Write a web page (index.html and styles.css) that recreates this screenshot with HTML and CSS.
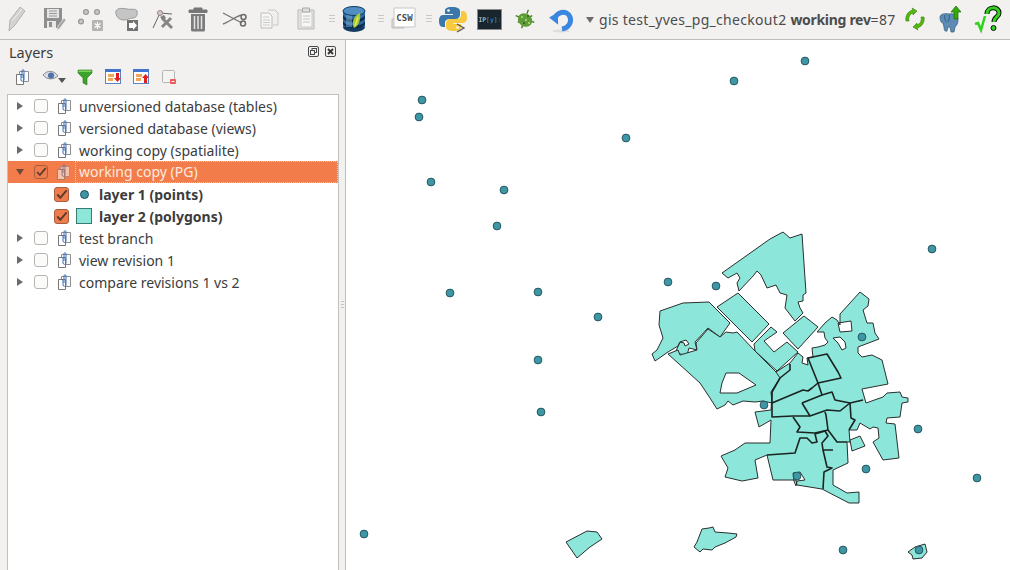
FILE: index.html
```html
<!DOCTYPE html>
<html lang="en">
<head>
<meta charset="UTF-8">
<title>QGIS - Layers</title>
<link rel="stylesheet" href="styles.css">
</head>
<body>
<svg class="defs" width="0" height="0">
    <symbol id="group" viewBox="0 0 16 18">
        <path d="M5.500 3.500h9v10h-9z" fill="#fafafa" stroke="#8e8e8e"/>
        <path d="M2.500 6.500h7v10h-7z" fill="#fff" stroke="#777"/>
        <path d="M7 6v6c0 1.800 3 1.800 3 0V2.800c0-1.500-2-1.500-2 0V10" fill="none" stroke="#3f70b8"/>
    </symbol>
    <symbol id="check" viewBox="0 0 14 14">
        <path d="M2.500 7l3.200 3.500L12.500 2.500" fill="none" stroke="#5a3a2c" stroke-width="2"/>
    </symbol>
</svg>

<header class="toolbar">
    <svg class="slot wide" viewBox="0 0 36 39"><path d="M10 31l1-11L21 7l5 4-10 14z" fill="#d2d2d0" stroke="#b3b3b1"/><path d="M13 21l10-12" stroke="#eee"/></svg>
    <svg class="slot" viewBox="0 0 36 39"><path d="M8 8h18v17l-3 3H8z" fill="#8f8f8f"/><path d="M11 9h12v9H11z" fill="#e5e5e5"/><path d="M13 11h8M13 13.500h8M13 16h8" stroke="#999"/><path d="M11 21h9v7h-9z" fill="#e8e8e8"/><path d="M13 22h3v5h-3z" fill="#8f8f8f"/><path d="M21 31l1-5 6-8 2 2-6 8z" fill="#a4a4a4" stroke="#eee" stroke-width=".6"/></svg>
    <svg class="slot" viewBox="0 0 36 39"><g fill="#c9c9c9" stroke="#9a9a9a" stroke-width="1.300"><circle cx="14" cy="12" r="2.400"/><circle cx="25" cy="12" r="2.400"/><circle cx="9" cy="21.500" r="2.400"/></g><rect x="20" y="20" width="11" height="11" rx="1" fill="#b4b4b4"/><path d="M25.500 22v7M22.500 23.500l6 4M28.500 23.500l-6 4" stroke="#fff" stroke-width="1.200"/></svg>
    <svg class="slot" viewBox="0 0 36 39"><path d="M8 11c1-3 7-3 11-2 4 1 9-1 10 2 1 4-1 7-4 7-4 0-5 2-9 2-5 0-9-4-8-9z" fill="#c5c5c5" stroke="#9a9a9a"/><path d="M19 20h11v11H19z" fill="#727272"/><path d="M21 23h4v-2l4 4.500-4 4.500v-2h-4z" fill="#fff"/></svg>
    <svg class="slot" viewBox="0 0 36 39"><path d="M9 28l7-15 12 1" fill="none" stroke="#666"/><circle cx="16" cy="13" r="2.500" fill="#ccc" stroke="#a08080"/><path d="M18 27l9-9M18 18l10 10" stroke="#868686" stroke-width="3"/><path d="M16 17l4-2 2 3-3 2z" fill="#808080"/></svg>
    <svg class="slot" viewBox="0 0 36 39"><path d="M9 10h18v2.500H9zM14 10V8h8v2" fill="#777" stroke="#777"/><path d="M11 14h14v16a1.500 1.500 0 0 1-1.500 1.500h-11A1.500 1.500 0 0 1 11 30z" fill="#7b7b7b"/><path d="M14.500 16v13M18 16v13M21.500 16v13" stroke="#e4e4e4" stroke-width="1.500"/></svg>
    <svg class="slot" viewBox="0 0 36 39"><path d="M7 13l19 10M7 24c6-2 12-7 18-9" fill="none" stroke="#777" stroke-width="1.400"/><circle cx="27.500" cy="17" r="2.500" fill="none" stroke="#6a6a6a" stroke-width="1.500"/><circle cx="27" cy="23.500" r="2.500" fill="none" stroke="#6a6a6a" stroke-width="1.500"/></svg>
    <svg class="slot" viewBox="0 0 36 39"><path d="M16 10h7l3 3v12h-5" fill="#efefee" stroke="#c8c8c6"/><path d="M9 13h8l3 3v12H9z" fill="#f6f6f5" stroke="#bcbcba"/><path d="M11 17h6M11 20h7M11 22.500h7M11 25h7" stroke="#ccc"/></svg>
    <svg class="slot" viewBox="0 0 36 39"><path d="M10 10h16v19H10z" fill="#e3e3e1" stroke="#b9b9b7"/><path d="M13 12h11v15H13z" fill="#f7f7f6" stroke="#c8c8c6"/><path d="M14.500 8h7v4h-7z" fill="#ddd" stroke="#aaa"/><path d="M15 16h7M15 19h7M15 22h7" stroke="#c4c4c2"/></svg>
    <span class="grip"></span>
    <svg class="slot db" viewBox="0 0 28 39">
        <ellipse cx="14" cy="27" rx="11" ry="5" fill="#123b63"/><path d="M3 11h22v16H3z" fill="#2d6a9f"/><path d="M3 15c2 6 20 6 22 0v3c-2 6-20 6-22 0zM3 21c2 6 20 6 22 0v3c-2 6-20 6-22 0z" fill="#0f2d4f"/><path d="M6 12h6v15H6z" fill="#7fb0d8" opacity=".5"/><ellipse cx="14" cy="11" rx="11" ry="4.500" fill="#4f8dc2" stroke="#123b63"/>
        <path d="M14 28c-3-5 0-13 6-15 1 6-1 13-6 15z" fill="#a3c93a"/><path d="M15 26l3-9" stroke="#f0e64a" stroke-width="1.500"/>
    </svg>
    <span class="grip gap-l"></span>
    <svg class="slot csw" viewBox="0 0 30 39">
        <path d="M3 19h12v9H3z" fill="#dcdcdc" stroke="#bbb"/><path d="M5 8h21v19H5z" fill="#fff" stroke="#c6c6c6"/>
        <text x="15.500" y="21" class="csw-text">CSW</text>
    </svg>
    <span class="grip gap-r"></span>
    <svg class="slot py" viewBox="0 0 32 39">
        <path d="M15 7c-6 0-7 2-7 4v3h8v1H6c-3 0-4 3-4 6s1 6 4 6h2v-4c0-3 2-4 5-4h6c2 0 4-2 4-4v-4c0-2-2-4-8-4z" fill="#3a78ab"/><circle cx="11.500" cy="10.500" r="1.300" fill="#fff"/>
        <path d="M17 31c6 0 7-2 7-4v-3h-8v-1h10c3 0 4-3 4-6s-1-6-4-6h-2v4c0 3-2 4-5 4h-6c-2 0-4 2-4 4v4c0 2 2 4 8 4z" fill="#f7c93e"/><circle cx="20.500" cy="27.500" r="1.300" fill="#fff"/>
        <path d="M20 24l7 4-7 4" fill="none" stroke="#555" stroke-width="1.300"/>
    </svg>
    <svg class="slot ipy" viewBox="0 0 40 39">
        <rect x="8.500" y="9.500" width="24" height="20" fill="#18252d" stroke="#8b8b8b"/>
        <text x="9.500" y="22" class="ipy-text">IP<tspan fill="#4c9ed9">[y]</tspan><tspan fill="#2e6f9c">:</tspan></text>
    </svg>
    <svg class="slot bug" viewBox="0 0 32 39">
        <path d="M9 12l3 3M8 19h4M9 26l3-3M23 12l-3 3M24 19h-4M23 26l-3-3" stroke="#3d7a22" stroke-width="1.300" transform="rotate(-25 16 19)"/>
        <ellipse cx="16" cy="20" rx="7.500" ry="6.500" fill="#5d9c36" transform="rotate(35 16 20)"/>
        <circle cx="13" cy="17" r="1" fill="#b6dc83"/><circle cx="17" cy="20" r="1" fill="#b6dc83"/><circle cx="20" cy="23" r="1" fill="#b6dc83"/><circle cx="15" cy="23" r="1" fill="#2f6317"/><circle cx="19" cy="16" r="1" fill="#2f6317"/>
    </svg>
    <svg class="slot undo" viewBox="0 0 32 39">
        <ellipse cx="20" cy="31" rx="9" ry="1.500" fill="#ddd"/>
        <path d="M14 20c0-8 12-11 15-3 2 6-2 11-8 12" fill="none" stroke="#3a86e0" stroke-width="5"/>
        <path d="M8 18l8-6 2 12z" fill="#3a86e0" transform="rotate(8 12 18)"/>
    </svg>
    <svg class="caret" viewBox="0 0 10 39"><path d="M1 17h8l-4 6z" fill="#6c6c6c"/></svg>
    <span class="status">gis test_yves_pg_checkout2 <b>working rev</b>=87</span>
    <svg class="slot" viewBox="0 0 36 39">
        <path d="M9 21c-1-5 2-10 7-11l-1-2 5 3-4 4v-2c-3 1-5 4-4 8z" fill="#55b80f" stroke="#2f7a05" stroke-width=".6"/>
        <path d="M27 17c1 5-2 10-7 11l1 2-5-3 4-4v2c3-1 5-4 4-8z" fill="#55b80f" stroke="#2f7a05" stroke-width=".6"/>
    </svg>
    <svg class="slot" viewBox="0 0 36 39">
        <path d="M7 17c0-3 5-4 9-3 5-1 9 1 9 6 0 4-2 6-3 7l-1 5h-3l-1-5h-2l-1 4c-2 1-3-1-3-4l-1-4c-2 0-3-3-3-6z" fill="#5d8bb4" stroke="#32597d" stroke-width=".7"/>
        <path d="M12 15c-1 3 0 6 2 7M16 15c1 2 0 5-1 7" fill="none" stroke="#2f5578" stroke-width=".8"/>
        <path d="M21 19V12h-3l5-6 5 6h-3v7z" fill="#35a80c" stroke="#1f6b05" stroke-width=".7"/>
    </svg>
    <svg class="slot last" viewBox="0 0 36 39">
        <path d="M6 24l3-1 3 7 4-14" fill="none" stroke="#2fd41a" stroke-width="2.500"/>
        <path d="M18 14c0-8 12-8 12-1 0 4-5 4-5 9" fill="none" stroke="#111" stroke-width="5"/><path d="M18 14c0-8 12-8 12-1 0 4-5 4-5 9" fill="none" stroke="#2fd41a" stroke-width="3"/>
        <circle cx="24.500" cy="28" r="2.500" fill="#2fd41a" stroke="#111"/>
    </svg>
</header>

<main class="workspace">
    <aside class="layers">
        <div class="panel-title">
            <span>Layers</span>
            <span class="panel-btns">
                <svg viewBox="0 0 11 11"><rect x=".5" y=".5" width="10" height="10" rx="1.500" fill="none" stroke="#4a4a4a"/><rect x="4" y="2.500" width="4.500" height="4" fill="none" stroke="#4a4a4a"/><rect x="2.500" y="4.500" width="4" height="4" fill="#f2f1f0" stroke="#4a4a4a"/></svg>
                <svg viewBox="0 0 11 11"><rect x=".5" y=".5" width="10" height="10" rx="1.500" fill="none" stroke="#4a4a4a"/><path d="M3 3l5 5M8 3l-5 5" stroke="#333" stroke-width="1.800"/></svg>
            </span>
        </div>
        <div class="panel-tools">
            <svg class="tool" viewBox="0 0 28 18"><use href="#group" x="6" y="0" width="16" height="18"/></svg>
            <svg class="tool eye" viewBox="0 0 35 18"><path d="M7 7c4-5 11-5 15 1-5 4-11 4-15-1z" fill="#d9dbe3" stroke="#8a8a90"/><circle cx="15" cy="7.500" r="3" fill="#4f6fa8"/><path d="M22 10h8l-4 5z" fill="#555"/></svg>
            <svg class="tool" viewBox="0 0 28 18"><path d="M7 2h14v3l-5 5v7l-4-2v-5L7 5z" fill="#3ba32a" stroke="#2a7a1c" stroke-width=".6"/><path d="M7.500 2.500h13v1.500h-13z" fill="#7ed05f"/></svg>
            <svg class="tool" viewBox="0 0 28 18"><rect x="6.500" y="1.500" width="15" height="14" fill="#fff" stroke="#5c84c4"/><path d="M6 1h16v3H6z" fill="#3f74d0"/><path d="M9 6h6v3H9zM9 10h5v3H9z" fill="#f2a65a"/><path d="M17 5h3v5h2l-3.500 4-3.500-4h2z" fill="#e0201a"/></svg>
            <svg class="tool" viewBox="0 0 28 18"><rect x="6.500" y="1.500" width="15" height="14" fill="#fff" stroke="#5c84c4"/><path d="M6 1h16v3H6z" fill="#3f74d0"/><path d="M9 6h6v3H9zM9 10h5v3H9z" fill="#f2a65a"/><path d="M17 15h3v-5h2l-3.500-4-3.500 4h2z" fill="#e0201a"/></svg>
            <svg class="tool" viewBox="0 0 28 18"><rect x="7.500" y="2.500" width="12" height="12" rx="1" fill="#f4f4f3" stroke="#b5b5b3"/><rect x="15" y="11" width="6" height="5" rx="1" fill="#ee5a5a"/><path d="M16.500 13.500h3" stroke="#fff"/></svg>
        </div>
        <div class="tree">
            <div class="row"><span class="twist"></span><span class="cb"></span><svg class="grp"><use href="#group"/></svg><span class="name">unversioned database (tables)</span></div>
            <div class="row"><span class="twist"></span><span class="cb"></span><svg class="grp"><use href="#group"/></svg><span class="name">versioned database (views)</span></div>
            <div class="row"><span class="twist"></span><span class="cb"></span><svg class="grp"><use href="#group"/></svg><span class="name">working copy (spatialite)</span></div>
            <div class="row selected"><span class="twist open"></span><span class="cb on"><svg><use href="#check"/></svg></span><svg class="grp"><use href="#group"/></svg><span class="name">working copy (PG)</span></div>
            <div class="row child"><span class="cb on"><svg><use href="#check"/></svg></span><span class="legend"><span class="dot"></span></span><span class="name">layer 1 (points)</span></div>
            <div class="row child"><span class="cb on"><svg><use href="#check"/></svg></span><span class="legend"><span class="swatch"></span></span><span class="name">layer 2 (polygons)</span></div>
            <div class="row"><span class="twist"></span><span class="cb"></span><svg class="grp"><use href="#group"/></svg><span class="name">test branch</span></div>
            <div class="row"><span class="twist"></span><span class="cb"></span><svg class="grp"><use href="#group"/></svg><span class="name">view revision 1</span></div>
            <div class="row"><span class="twist"></span><span class="cb"></span><svg class="grp"><use href="#group"/></svg><span class="name">compare revisions 1 vs 2</span></div>
        </div>
    </aside>
    <div class="splitter"><span></span></div>

    <!-- viewBox is in screen coordinates so the features can be read straight off the map -->
    <svg class="map" viewBox="346 40 664 530">
        <g class="poly">
            <path d="M722 273L770 239 783 232 790 238 802 234 806 293 803 295 803 301 798 302 800 308 803 313 795 321 785 308 787 295 780 293 776 285 767 288 761 275 757 271 754 275 739 291 737 283 740 278 737 273 728 278z"/>
            <path d="M717 307L738 293 769 324 752 342z"/>
            <path d="M783 333L804 316 818 327 798 349z"/>
            <path d="M754 344L771 327 777 332 764 341 774 352 787 342 798 352 777 371 755 351z"/>
            <path d="M660 311L683 303 709 302 730 323 720 337 708 328 695 342 697 350 689 348 687 355 680 354 676 351 680 342 684 343 685 346 689 344 686 340 680 342 678 346 668 352 655 361 652 354 657 350 663 338 659 325z"/>
            <path fill-rule="evenodd" d="M668 354L678 350 680 355 697 350 696 343 708 329 720 337 726 332 733 333 737 332 755 351 776 372 790 364 789 369 780 378 771 392 772 403 763 401 755 402 743 401 733 405 728 401 725 405 717 409 710 398 700 383zM726 373L739 373 756 385 737 393 720 393 722 383z"/>
            <path fill-rule="evenodd" d="M776 372L790 363 798 353 803 357 802 363 808 365 807 358 813 357 812 348 818 347 825 345 828 342 825 338 824 332 817 332 825 323 832 317 837 320 840 325 840 314 860 292 869 299 868 306 863 310 867 323 873 323 875 333 879 339 858 347 858 353 862 357 872 355 882 360 888 384 862 389 866 403 883 397 887 393 900 392 902 397 908 398 908 402 902 403 900 417 887 418 886 423 895 424 899 458 883 460 873 442 879 438 878 428 873 427 870 429 860 423 857 430 849 430 850 442 847 442 848 463 833 470 833 485 847 493 859 492 859 503 849 503 822 489 797 485 796 480 773 480 767 455 755 460 758 478 742 481 725 477 728 468 721 456 735 450 745 443 770 443 771 420 759 427 755 412 771 410 772 392 780 378zM838 323L851 321 852 331 840 332zM833 338L840 337 845 342 846 348 842 350 838 343zM793 473L800 472 805 480 797 481 796 486 794 481z"/>
            <path d="M850 440L860 436 865 446 852 451z"/>
            <path d="M566 542L587 531 597 532 602 539 590 547 577 558z"/>
            <path d="M702 529L709 528 713 527 715 532 728 533 737 534 736 537 725 543 715 547 712 550 703 549 700 552 694 547 697 542z"/>
            <path d="M908 552L915 547 925 544 927 552 922 558 913 559 912 555z"/>
        </g>
        <g class="lines">
            <path d="M772 392L780 378 790 370 790 364"/>
            <path d="M772 403L803 390 808 391 812 388 818 383"/>
            <path d="M808 358L827 354 838 372 841 378 818 383z"/>
            <path d="M818 383L822 395 832 392 835 400 850 403 863 400"/>
            <path d="M802 403L822 395"/>
            <path d="M802 403L810 416"/>
            <path d="M772 392V417L793 416 810 416 827 410 840 411 850 403"/>
            <path d="M793 417L800 427 797 432 815 433 828 430 826 415 825 412"/>
            <path d="M828 430L837 442 847 442"/>
            <path d="M850 403L851 418 855 420 849 430"/>
            <path d="M767 455L795 453 800 438 807 438 812 443 817 442 815 434 825 431 828 436 822 443 823 450 833 450"/>
            <path d="M823 450L827 467 832 468 824 472 823 489"/>
        </g>
        <g class="points">
            <circle cx="734" cy="81" r="3.900"/><circle cx="805" cy="61" r="3.900"/><circle cx="422" cy="100" r="3.900"/>
            <circle cx="419" cy="117" r="3.900"/><circle cx="626" cy="138" r="3.900"/><circle cx="431" cy="182" r="3.900"/>
            <circle cx="504" cy="190" r="3.900"/><circle cx="497" cy="226" r="3.900"/><circle cx="932" cy="249" r="3.900"/>
            <circle cx="668" cy="282" r="3.900"/><circle cx="716" cy="286" r="3.900"/><circle cx="450" cy="293" r="3.900"/>
            <circle cx="538" cy="292" r="3.900"/><circle cx="598" cy="317" r="3.900"/><circle cx="862" cy="337" r="3.900"/>
            <circle cx="538" cy="360" r="3.900"/><circle cx="541" cy="412" r="3.900"/><circle cx="764" cy="405" r="3.900"/>
            <circle cx="918" cy="429" r="3.900"/><circle cx="866" cy="469" r="3.900"/><circle cx="977" cy="478" r="3.900"/>
            <circle cx="364" cy="534" r="3.900"/><circle cx="843" cy="550" r="3.900"/><circle cx="919" cy="550" r="3.900"/>
            <circle cx="797" cy="476" r="3.900"/>
        </g>
    </svg>
</main>
</body>
</html>
```

FILE: styles.css
```css
* {
    box-sizing: border-box;
}
body {
    margin: 0;
    width: 1010px;
    height: 570px;
    overflow: hidden;
    display: flex;
    flex-direction: column;
    background-color: #F2F1F0;
    color: #3C3C3C;
    font-family: "Noto Sans", sans-serif;
    font-size: 14px;
}
.defs {
    position: absolute;
}
.toolbar {
    display: flex;
    height: 40px;
    flex-shrink: 0;
    border-bottom: 1px solid #BFBDBA;
}
.slot {
    width: 36px;
    height: 39px;
    flex-shrink: 0;
}
.slot.wide {
    margin-left: -1px;
    margin-right: 1px;
}
.slot.db {
    width: 28px;
}
.slot.csw {
    width: 30px;
}
.slot.py,
.slot.bug,
.slot.undo {
    width: 32px;
}
.slot.ipy {
    width: 40px;
}
.grip {
    width: 16px;
    height: 9px;
    margin-top: 15px;
    flex-shrink: 0;
    background: repeating-linear-gradient(#C9C9C7 0 1px, transparent 1px 3px) center / 6px 100% no-repeat;
}
.grip.gap-l {
    margin-left: 5px;
}
.grip.gap-r {
    margin-left: 2px;
}
.csw-text {
    font-family: "DejaVu Sans Mono", monospace;
    font-size: 9px;
    font-weight: bold;
    fill: #4A4A4A;
    text-anchor: middle;
}
.ipy-text {
    font-family: "DejaVu Sans Mono", monospace;
    font-size: 6.3px;
    fill: #DDE3E6;
}
.caret {
    width: 10px;
    height: 39px;
    margin-left: 12px;
    flex-shrink: 0;
}
.status {
    width: 298px;
    margin-left: 4px;
    flex-shrink: 0;
    line-height: 39px;
    color: #4C4C4C;
    letter-spacing: .3px;
    white-space: nowrap;
}
.status b {
    letter-spacing: -.3px;
}
.workspace {
    display: flex;
    flex: 1;
    min-height: 0;
}
.layers {
    width: 340px;
    flex-shrink: 0;
    display: flex;
    flex-direction: column;
}
.panel-title {
    display: flex;
    justify-content: space-between;
    align-items: center;
    height: 23px;
    padding: 0 4px 0 9px;
    font-size: 14.5px;
}
.panel-btns {
    display: flex;
    gap: 6px;
}
.panel-btns svg {
    width: 11px;
    height: 11px;
}
.panel-tools {
    display: flex;
    height: 27px;
    padding-left: 8px;
    align-items: center;
}
.tool {
    width: 28px;
    height: 18px;
}
.tool.eye {
    width: 35px;
}
.tree {
    flex: 1;
    margin: 4px 1px 0 7px;
    padding-top: 0;
    background: #FFFFFF;
    border: 1px solid #C2C0BD;
    border-bottom: none;
}
.row {
    display: flex;
    align-items: center;
    height: 22px;
    white-space: nowrap;
}
.row.selected {
    background: #F37D4A;
    color: #FBE9DF;
}
.row.child {
    padding-left: 46px;
    font-weight: bold;
}
.twist {
    width: 0;
    height: 0;
    flex-shrink: 0;
    margin: 0 11px 0 9px;
    border-left: 6px solid #6B6B6B;
    border-top: 4.5px solid transparent;
    border-bottom: 4.5px solid transparent;
}
.twist.open {
    margin: 0 10px 0 8px;
    border-left: 4.5px solid transparent;
    border-right: 4.5px solid transparent;
    border-top: 6px solid #6B4A3A;
    border-bottom: none;
}
.cb {
    width: 14px;
    height: 14px;
    flex-shrink: 0;
    background: #FBFBFA;
    border: 1px solid #B8B5B1;
    border-radius: 3px;
}
.cb.on {
    background: #EF7C4C;
    border-color: #A85E3E;
}
.child .cb {
    width: 15px;
    height: 15px;
}
.cb svg {
    display: block;
    width: 100%;
    height: 100%;
}
.grp {
    width: 16px;
    height: 18px;
    margin: 0 7px 0 8px;
    flex-shrink: 0;
}
.selected .grp {
    margin-left: 7px;
    opacity: .55;
}
.selected .name {
    flex: 1;
    margin-left: -3px;
    padding-left: 3px;
    line-height: 20px;
    border: 1px dotted #F9C3A6;
}
.legend {
    display: flex;
    align-items: center;
    justify-content: center;
    width: 30px;
    flex-shrink: 0;
}
.dot {
    width: 9px;
    height: 9px;
    background: #3F97A5;
    border: 1px solid #1F4F58;
    border-radius: 50%;
}
.swatch {
    width: 16px;
    height: 16px;
    background: #8CE6D9;
    border: 1px solid #3A7C72;
}
.splitter {
    display: flex;
    align-items: center;
    justify-content: center;
    width: 6px;
    flex-shrink: 0;
    border-right: 1px solid #BFBDBA;
}
.splitter span {
    width: 3px;
    height: 9px;
    background: repeating-linear-gradient(#C6C4C1 0 1px, transparent 1px 3px);
}
.map {
    flex: 1;
    min-width: 0;
    height: 530px;
    background: #FFFFFF;
}
.poly path {
    fill: #8CE6D9;
    stroke: #2B2F2E;
    stroke-width: 1;
    stroke-linejoin: round;
}
.lines path {
    fill: none;
    stroke: #1B2422;
    stroke-width: 1.6;
    stroke-linejoin: round;
}
.points circle {
    fill: #3F97A5;
    stroke: #1F4F58;
    stroke-width: .9;
}
```
